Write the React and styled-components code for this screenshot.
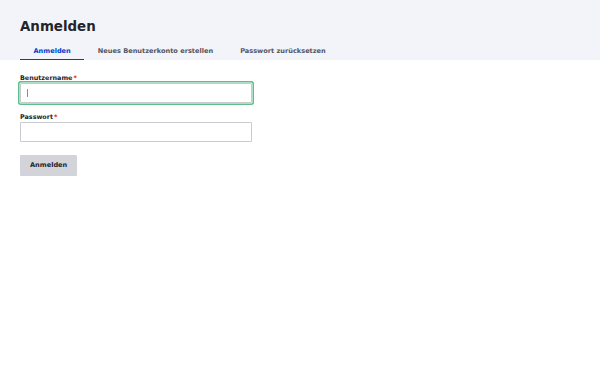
import React from 'react';
import styled, { createGlobalStyle } from 'styled-components';

const GlobalStyle = createGlobalStyle`
  html, body {
    margin: 0;
    padding: 0;
    background: #fff;
    font-family: "DejaVu Sans", "Noto Sans", sans-serif;
    color: #232429;
  }
  * { box-sizing: border-box; }
`;

const Header = styled.header`
  background: #f3f4f9;
  padding: 17px 20px 0;
`;

const Title = styled.h1`
  margin: 0 0 10px;
  font-size: 13.4px;
  line-height: 20px;
  font-weight: 700;
  color: #232429;
`;

const Tabs = styled.nav`
  display: flex;
`;

const Tab = styled.a`
  display: block;
  padding: 0 13.5px 3.5px;
  line-height: 8px;
  font-size: 6.6px;
  font-weight: 700;
  text-decoration: none;
  white-space: nowrap;
  color: ${p => (p.$active ? '#003ecc' : '#545560')};
  border-bottom: 1.5px solid ${p => (p.$active ? '#003ecc' : 'transparent')};
`;

const Main = styled.main`
  padding: 13px 20px;
`;

const Field = styled.div`
  margin-bottom: 9px;
  width: 232px;
`;

const Label = styled.label`
  display: block;
  font-size: 6.4px;
  font-weight: 700;
  line-height: 10px;
  color: #232429;
`;

const Required = styled.span`
  color: #dc2323;
  margin-left: 1px;
`;

const InputWrap = styled.div`
  position: relative;
`;

const Input = styled.input`
  display: block;
  width: 100%;
  height: 20px;
  margin: 0;
  padding: 0 6px;
  font: inherit;
  font-size: 8px;
  border: 1px solid #c9cacf;
  border-radius: 1px;
  outline: none;
  background: #fff;
  caret-color: transparent;
  box-shadow: ${p => (p.$focus ? '0 0 0 0.5px #fff, 0 0 0 2px #5cbf8c' : 'none')};
`;

const Caret = styled.span`
  position: absolute;
  left: 6.5px;
  top: 6.5px;
  width: 1px;
  height: 7.5px;
  background: #8a8b90;
`;

const Button = styled.button`
  display: block;
  margin-top: 13px;
  height: 21px;
  padding: 0 10px;
  border: none;
  border-radius: 1px;
  background: #d3d4d9;
  color: #232429;
  font-family: inherit;
  font-size: 6.6px;
  font-weight: 700;
  cursor: pointer;
`;

export default function App() {
  return (
    <>
      <GlobalStyle />
      <Header>
        <Title>Anmelden</Title>
        <Tabs>
          <Tab $active href="#">Anmelden</Tab>
          <Tab href="#">Neues Benutzerkonto erstellen</Tab>
          <Tab href="#">Passwort zurücksetzen</Tab>
        </Tabs>
      </Header>
      <Main>
        <Field>
          <Label>Benutzername<Required>*</Required></Label>
          <InputWrap>
            <Input $focus type="text" />
            <Caret />
          </InputWrap>
        </Field>
        <Field>
          <Label>Passwort<Required>*</Required></Label>
          <Input type="password" />
        </Field>
        <Button>Anmelden</Button>
      </Main>
    </>
  );
}
